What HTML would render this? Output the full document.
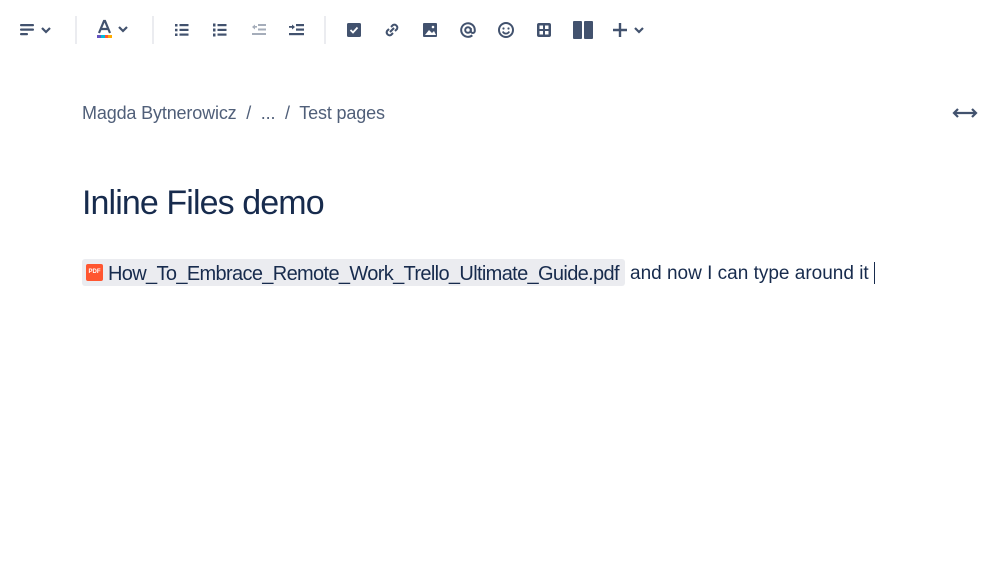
<!DOCTYPE html>
<html><head><style>
body{margin:0;width:999px;height:567px;background:#fff;font-family:"Liberation Sans",sans-serif;position:relative;overflow:hidden}
.a{position:absolute}
.sep{position:absolute;top:16px;width:2px;height:28px;background:#ebecf0}
svg{position:absolute}
</style></head><body>
<!-- toolbar -->
<svg style="left:18px;top:20px" width="40" height="20" viewBox="0 0 40 20"><g fill="#42526e"><rect x="2" y="4" width="14" height="2.2" rx="1"/><rect x="2" y="8.5" width="14" height="2.2" rx="1"/><rect x="2" y="13" width="8" height="2.2" rx="1"/></g><path d="M24 8l4 4 4-4" stroke="#42526e" stroke-width="2.2" fill="none"/></svg>
<div class="sep" style="left:75px"></div>
<svg style="left:94px;top:18px" width="40" height="22" viewBox="0 0 40 22"><path d="M5 15L10 3h1L16 15M7 11h7" stroke="#42526e" stroke-width="2.2" fill="none"/><rect x="3" y="17" width="4" height="3" fill="#6554c0"/><rect x="7" y="17" width="4" height="3" fill="#00b8d9"/><rect x="11" y="17" width="3" height="3" fill="#ff5630"/><rect x="14" y="17" width="4" height="3" fill="#ffab00"/><path d="M25 9l4 4 4-4" stroke="#42526e" stroke-width="2.2" fill="none"/></svg>
<div class="sep" style="left:152px"></div>
<svg style="left:172px;top:20px" width="20" height="20"><g fill="#42526e"><rect x="3" y="4" width="2.5" height="2.5"/><rect x="3" y="8.8" width="2.5" height="2.5"/><rect x="3" y="13.5" width="2.5" height="2.5"/><rect x="7.5" y="4" width="9" height="2.2"/><rect x="7.5" y="8.8" width="9" height="2.2"/><rect x="7.5" y="13.5" width="9" height="2.2"/></g></svg>
<svg style="left:210px;top:20px" width="20" height="20"><g fill="#42526e"><rect x="3" y="3.5" width="2.5" height="3"/><rect x="3" y="8.5" width="2.5" height="3"/><rect x="3" y="13.5" width="2.5" height="3"/><rect x="7.5" y="4" width="9" height="2.2"/><rect x="7.5" y="8.8" width="9" height="2.2"/><rect x="7.5" y="13.5" width="9" height="2.2"/></g></svg>
<svg style="left:249px;top:20px" width="20" height="20"><g fill="#a5adba"><path d="M3 7l3-2.5v5z"/><rect x="5" y="6" width="3" height="1.6"/><rect x="9" y="4" width="8" height="2"/><rect x="9" y="8.5" width="8" height="2"/><rect x="3" y="13" width="14" height="2"/></g></svg>
<svg style="left:287px;top:20px" width="20" height="20"><g fill="#42526e"><path d="M8 7l-3-2.5v5z"/><rect x="2" y="6" width="4" height="1.8"/><rect x="9" y="4" width="8" height="2.2"/><rect x="9" y="8.5" width="8" height="2.2"/><rect x="2" y="13" width="15" height="2.2"/></g></svg>
<div class="sep" style="left:324px"></div>
<svg style="left:344px;top:20px" width="20" height="20"><rect x="3" y="3" width="14" height="14" rx="1.5" fill="#42526e"/><path d="M6.5 10l2.5 2.5 4.5-5" stroke="#fff" stroke-width="1.8" fill="none"/></svg>
<svg style="left:382px;top:20px" width="20" height="20"><g stroke="#42526e" stroke-width="2" fill="none"><path d="M9 7l2-2a3 3 0 014 4l-2 2"/><path d="M11 13l-2 2a3 3 0 01-4-4l2-2"/><path d="M8 12l4-4"/></g></svg>
<svg style="left:420px;top:20px" width="20" height="20"><rect x="3" y="3" width="14" height="14" rx="1" fill="#42526e"/><path d="M5 15l4-5 3 3 2-2 2 4z" fill="#fff"/><circle cx="13" cy="7" r="1.3" fill="#fff"/></svg>
<svg style="left:458px;top:20px" width="20" height="20"><g stroke="#42526e" stroke-width="2" fill="none"><circle cx="10" cy="10" r="2.8"/><path d="M12.8 8v3a2 2 0 004 0V10a6.8 6.8 0 10-2.5 5.3"/></g></svg>
<svg style="left:496px;top:20px" width="20" height="20"><circle cx="10" cy="10" r="7" stroke="#42526e" stroke-width="2" fill="none"/><circle cx="7.5" cy="8.5" r="1.1" fill="#42526e"/><circle cx="12.5" cy="8.5" r="1.1" fill="#42526e"/><path d="M6.8 11.5a3.5 3.5 0 006.4 0" stroke="#42526e" stroke-width="1.8" fill="none"/></svg>
<svg style="left:534px;top:20px" width="20" height="20"><rect x="3" y="3" width="14" height="14" rx="2" fill="#42526e"/><g fill="#fff"><rect x="5.5" y="5.5" width="3.5" height="3.5"/><rect x="11" y="5.5" width="3.5" height="3.5"/><rect x="5.5" y="11" width="3.5" height="3.5"/><rect x="11" y="11" width="3.5" height="3.5"/></g></svg>
<svg style="left:572px;top:19px" width="22" height="22"><rect x="1" y="2" width="9" height="18" rx="1" fill="#42526e"/><rect x="12" y="2" width="9" height="18" rx="1" fill="#42526e"/></svg>
<svg style="left:610px;top:20px" width="40" height="20"><path d="M10 3v14M3 10h14" stroke="#42526e" stroke-width="2.4"/><path d="M25 8l4 4 4-4" stroke="#42526e" stroke-width="2.2" fill="none"/></svg>
<!-- breadcrumb -->
<div class="a" style="left:82px;top:103px;font-size:18px;color:#505f79;white-space:pre;letter-spacing:-0.15px">Magda Bytnerowicz  /  ...  /  Test pages</div>
<svg style="left:952px;top:106px" width="26" height="14"><g stroke="#42526e" stroke-width="2.2" fill="none"><path d="M6 3L2 7l4 4"/><path d="M20 3l4 4-4 4"/><path d="M3 7h20"/></g></svg>
<div class="a" style="left:82px;top:184px;font-size:34px;color:#172b4d;letter-spacing:-0.9px">Inline Files demo</div>
<div class="a" style="left:82px;top:259px;width:543px;height:27px;background:#ebecf0;border-radius:3px"></div>
<div class="a" style="left:86px;top:264px;width:17px;height:17px;background:#ff5630;border-radius:2px;color:#fff;font-size:6px;font-weight:bold;line-height:17px;text-align:center">PDF</div>
<div class="a" style="left:108px;top:263px;font-size:20px;color:#172b4d;white-space:nowrap;letter-spacing:-0.65px">How_To_Embrace_Remote_Work_Trello_Ultimate_Guide.pdf</div>
<div class="a" style="left:630px;top:263px;font-size:19px;color:#172b4d;white-space:nowrap;letter-spacing:0px">and now I can type around it</div>
<div class="a" style="left:874px;top:262px;width:1px;height:22px;background:#172b4d"></div>
</body></html>
